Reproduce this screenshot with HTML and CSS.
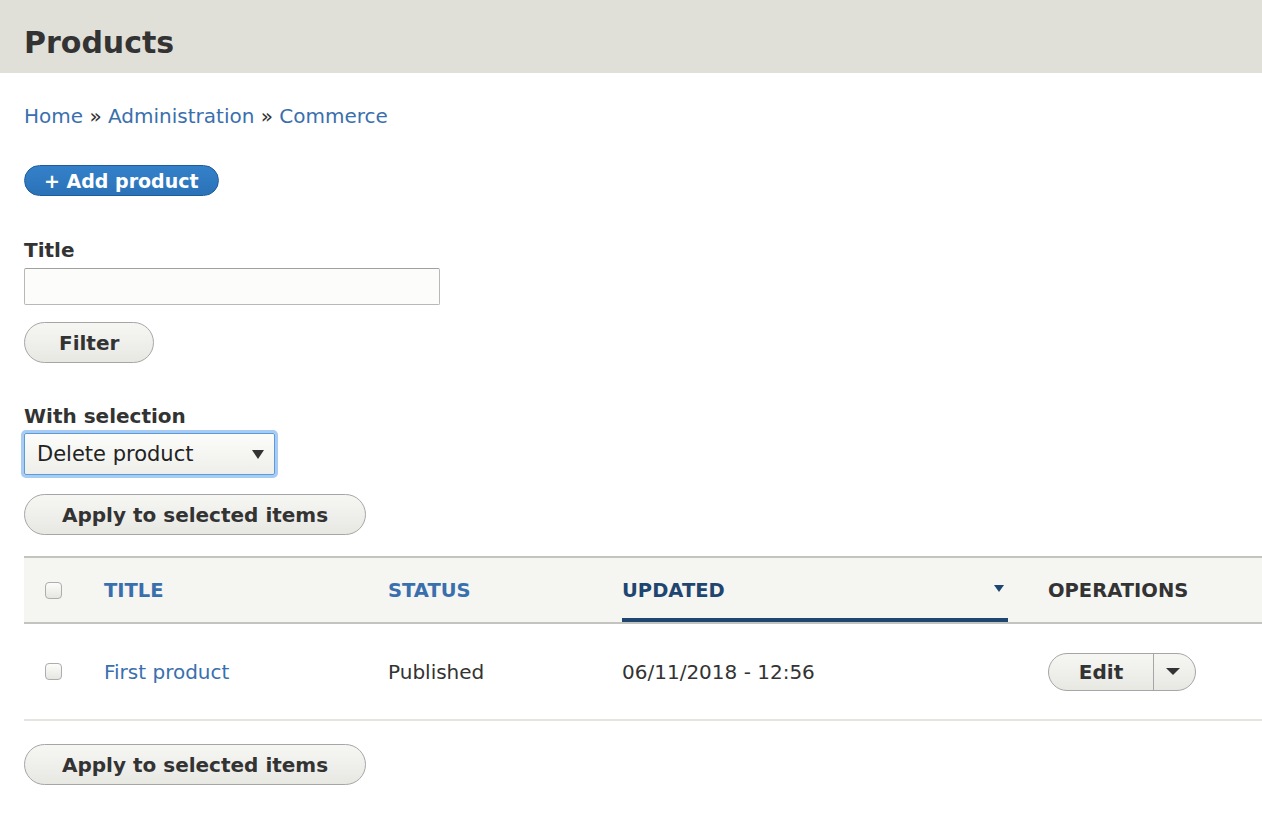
FILE: index.html
```html
<!DOCTYPE html>
<html>
<head>
<meta charset="utf-8">
<link rel="stylesheet" href="styles.css">
</head>
<body>
<header class="page-header"><h1 class="page-title">Products</h1></header>
<main class="content">
  <nav class="breadcrumb"><a href="#">Home</a> » <a href="#">Administration</a> » <a href="#">Commerce</a></nav>
  <div class="actions"><a class="button button-primary" href="#">+ Add product</a></div>
  <form class="filters">
    <label class="form-label" for="title">Title</label>
    <input class="form-text" id="title" type="text">
    <div><button class="button" type="button">Filter</button></div>
  </form>
  <div class="bulk">
    <label class="form-label" for="sel">With selection</label>
    <div class="select focus"><span>Delete product</span><span class="select-arrow"></span></div>
    <div><button class="button" type="button">Apply to selected items</button></div>
  </div>
  <table class="list">
    <thead>
      <tr>
        <th class="col-check"><span class="checkbox"></span></th>
        <th class="col-title"><a href="#">Title</a></th>
        <th class="col-status"><a href="#">Status</a></th>
        <th class="col-updated is-active"><a href="#"><span>Updated</span><span class="sort-arrow"></span></a></th>
        <th class="col-ops">Operations</th>
      </tr>
    </thead>
    <tbody>
      <tr>
        <td class="col-check"><span class="checkbox"></span></td>
        <td><a href="#">First product</a></td>
        <td>Published</td>
        <td>06/11/2018 - 12:56</td>
        <td>
          <div class="dropbutton"><span class="dropbutton-main">Edit</span><span class="dropbutton-toggle"><span class="toggle-arrow"></span></span></div>
        </td>
      </tr>
    </tbody>
  </table>
  <div class="bottom-actions"><button class="button" type="button">Apply to selected items</button></div>
</main>
</body>
</html>
```
FILE: styles.css
```css
* { box-sizing: border-box; }
html, body { margin: 0; padding: 0; background: #fff; }
body {
  font-family: "DejaVu Sans", "Liberation Sans", sans-serif;
  color: #333;
  font-size: 20px;
}
a { color: #3a6fae; text-decoration: none; }

.page-header {
  background: #e0e0d8;
  height: 73px;
  padding: 13px 24px 0;
  display: flex;
  align-items: center;
}
.page-title {
  margin: 0;
  font-size: 30px;
  font-weight: bold;
  color: #333;
  line-height: 1;
}

.content { padding: 0 0 0 24px; }

.breadcrumb {
  margin-top: 31px;
  line-height: 24px;
  height: 24px;
  color: #333;
}

.actions { margin-top: 37px; }

.button {
  display: inline-flex;
  align-items: center;
  justify-content: center;
  font-family: inherit;
  font-size: 20px;
  font-weight: bold;
  color: #333;
  height: 41px;
  padding: 0 37px;
  border: 1px solid #a6a6a6;
  border-radius: 21px;
  background: linear-gradient(#f6f6f3, #e8e8e3);
  cursor: pointer;
}
.button-primary {
  height: 31px;
  font-size: 19px;
  padding: 0 19px;
  color: #fff;
  background: linear-gradient(#3481c9, #2b72b8);
  border-color: #1e5d9c;
  border-radius: 16px;
}

.filters { margin: 42px 0 0; }
.form-label {
  display: block;
  font-weight: bold;
  font-size: 20px;
  line-height: 24px;
  height: 24px;
}
.form-text {
  display: block;
  width: 416px;
  height: 37px;
  margin-top: 6px;
  border: 1px solid #b8b8b8;
  border-top-color: #a0a0a0;
  border-radius: 2px;
  background: #fcfcfa;
  font-family: inherit;
  font-size: 20px;
}
.filters .button { margin-top: 17px; padding: 0 34px; }

.bulk { margin-top: 41px; }
.select {
  display: flex;
  align-items: center;
  justify-content: space-between;
  width: 251px;
  height: 42px;
  margin-top: 5px;
  padding: 0 10px 0 12px;
  border: 1px solid #5b9bd8;
  border-radius: 2px;
  background: linear-gradient(#fcfcfa, #eeeeea);
  box-shadow: 0 0 0 3px #a7cbf2;
  font-size: 21px;
  color: #222;
}
.select-arrow {
  width: 0; height: 0;
  border-left: 6px solid transparent;
  border-right: 6px solid transparent;
  border-top: 9px solid #333;
}
.bulk .button { margin-top: 19px; }

.list {
  margin-top: 21px;
  width: calc(100% + 20px);
  border-collapse: collapse;
  border-top: 2px solid #c4c4bf;
}
.list thead tr {
  background: #f5f5f2;
  border-bottom: 2px solid #c4c4bf;
}
.list th {
  height: 64px;
  padding: 0 20px;
  text-align: left;
  font-weight: bold;
  text-transform: uppercase;
  font-size: 19.5px;
  color: #333;
  vertical-align: middle;
}
.list th a { color: #3a6fae; }
.list .col-check { width: 60px; padding: 0 0 0 21px; }
.list .col-title { width: 284px; }
.list .col-status { width: 234px; }
.list .col-updated { width: 426px; }
.list th.is-active a {
  color: #1f4670;
  display: flex;
  justify-content: space-between;
  align-items: center;
  height: 64px;
  border-bottom: 4px solid #1f4670;
  padding-top: 4px;
}
.sort-arrow {
  width: 0; height: 0;
  border-left: 5px solid transparent;
  border-right: 5px solid transparent;
  border-top: 7px solid #1f4670;
  margin-right: 4px;
  margin-top: -4px;
}
.list td {
  height: 97px;
  padding: 0 20px;
  vertical-align: middle;
  color: #333;
}
.list td.col-check { padding-left: 21px; }
.list tbody tr { border-bottom: 2px solid #e6e4df; }

.checkbox {
  display: block;
  width: 17px;
  height: 17px;
  border: 1px solid #adadad;
  border-radius: 4px;
  background: linear-gradient(#fcfcfa, #e6e6e2);
}

.dropbutton {
  display: inline-flex;
  height: 38px;
  border: 1px solid #a6a6a6;
  border-radius: 19px;
  background: linear-gradient(#f6f6f3, #e8e8e3);
  overflow: hidden;
}
.dropbutton-main {
  width: 105px;
  display: flex;
  align-items: center;
  justify-content: center;
  font-weight: bold;
  color: #333;
  border-right: 1px solid #a6a6a6;
}
.dropbutton-toggle {
  width: 41px;
  display: flex;
  align-items: center;
  justify-content: center;
}
.toggle-arrow {
  width: 0; height: 0;
  border-left: 7px solid transparent;
  border-right: 7px solid transparent;
  border-top: 7px solid #333;
  margin-right: 4px;
}

.bottom-actions { margin-top: 23px; padding-bottom: 40px; }
```
